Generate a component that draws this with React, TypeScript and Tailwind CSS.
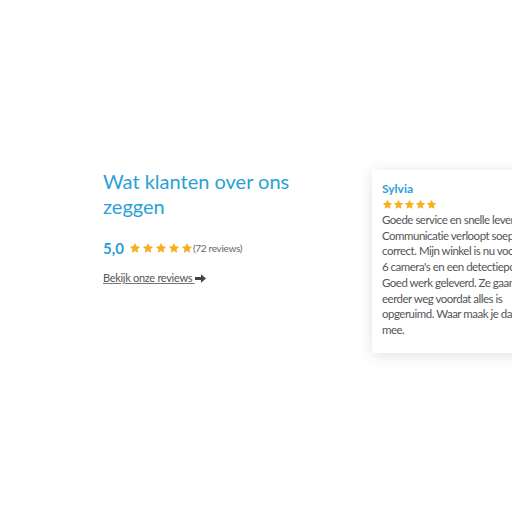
import React from 'react';

const Star = ({ size = 12 }: { size?: number }) => (
  <svg width={size} height={size} viewBox="0 0 24 24" className="shrink-0">
    <path
      d="M12 1.8l3.1 6.6 7.2.9-5.3 5 1.4 7.1L12 17.9l-6.4 3.5 1.4-7.1-5.3-5 7.2-.9z"
      fill="#f6b01e"
    />
  </svg>
);

const Stars = ({ size, gap }: { size: number; gap: string }) => (
  <div className={`flex items-center ${gap}`}>
    {[0, 1, 2, 3, 4].map((i) => (
      <Star key={i} size={size} />
    ))}
  </div>
);

const Arrow = () => (
  <svg width="11" height="9" viewBox="0 0 11 9" className="shrink-0">
    <path d="M0 3h6V0.3L11 4.5 6 8.7V6H0z" fill="#444" />
  </svg>
);

export default function App() {
  return (
    <div
      className="h-[512px] w-[512px] overflow-hidden bg-white"
      style={{ fontFamily: 'Lato, "Open Sans", sans-serif' }}
    >
      <div className="flex items-start pt-[170px] pl-[103px]">
        {/* Left column */}
        <div className="w-[269px] shrink-0">
          <h2 className="-mt-[1px] text-[20px] leading-[25px] text-[#2b9fd6]">
            Wat klanten over ons
            <br />
            zeggen
          </h2>
          <div className="mt-[20px] flex items-center gap-[5px]">
            <span className="text-[15px] leading-[18px] font-bold text-[#2b9fd6]">5,0</span>
            <Stars size={12} gap="gap-[1px]" />
            <span className="-ml-[5px] text-[10px] tracking-[-0.3px] text-[#666]">(72 reviews)</span>
          </div>
          <a
            href="#"
            className="mt-[13px] inline-flex items-center text-[11px] tracking-[-0.3px] text-[#555] underline decoration-[#777]"
          >
            Bekijk onze reviews&nbsp;
            <Arrow />
          </a>
        </div>

        {/* Review card */}
        <div className="w-[200px] shrink-0 bg-white pt-[11px] pb-[15px] pl-[10px] shadow-[0_2px_14px_rgba(0,0,0,0.12)]">
          <div className="text-[12px] leading-[16px] font-bold text-[#2b9fd6]">Sylvia</div>
          <div className="mt-[2px]">
            <Stars size={11} gap="gap-[0px]" />
          </div>
          <p className="mt-[2px] whitespace-nowrap text-[11.5px] leading-[15.7px] tracking-[-0.5px] text-[#555]">
            Goede service en snelle levering.
            <br />
            Communicatie verloopt soepel en
            <br />
            correct. Mijn winkel is nu voorzien van
            <br />
            6 camera's en een detectiepoort.
            <br />
            Goed werk geleverd. Ze gaan niet
            <br />
            eerder weg voordat alles is
            <br />
            opgeruimd. Waar maak je dat nog
            <br />
            mee.
          </p>
        </div>
      </div>
    </div>
  );
}
